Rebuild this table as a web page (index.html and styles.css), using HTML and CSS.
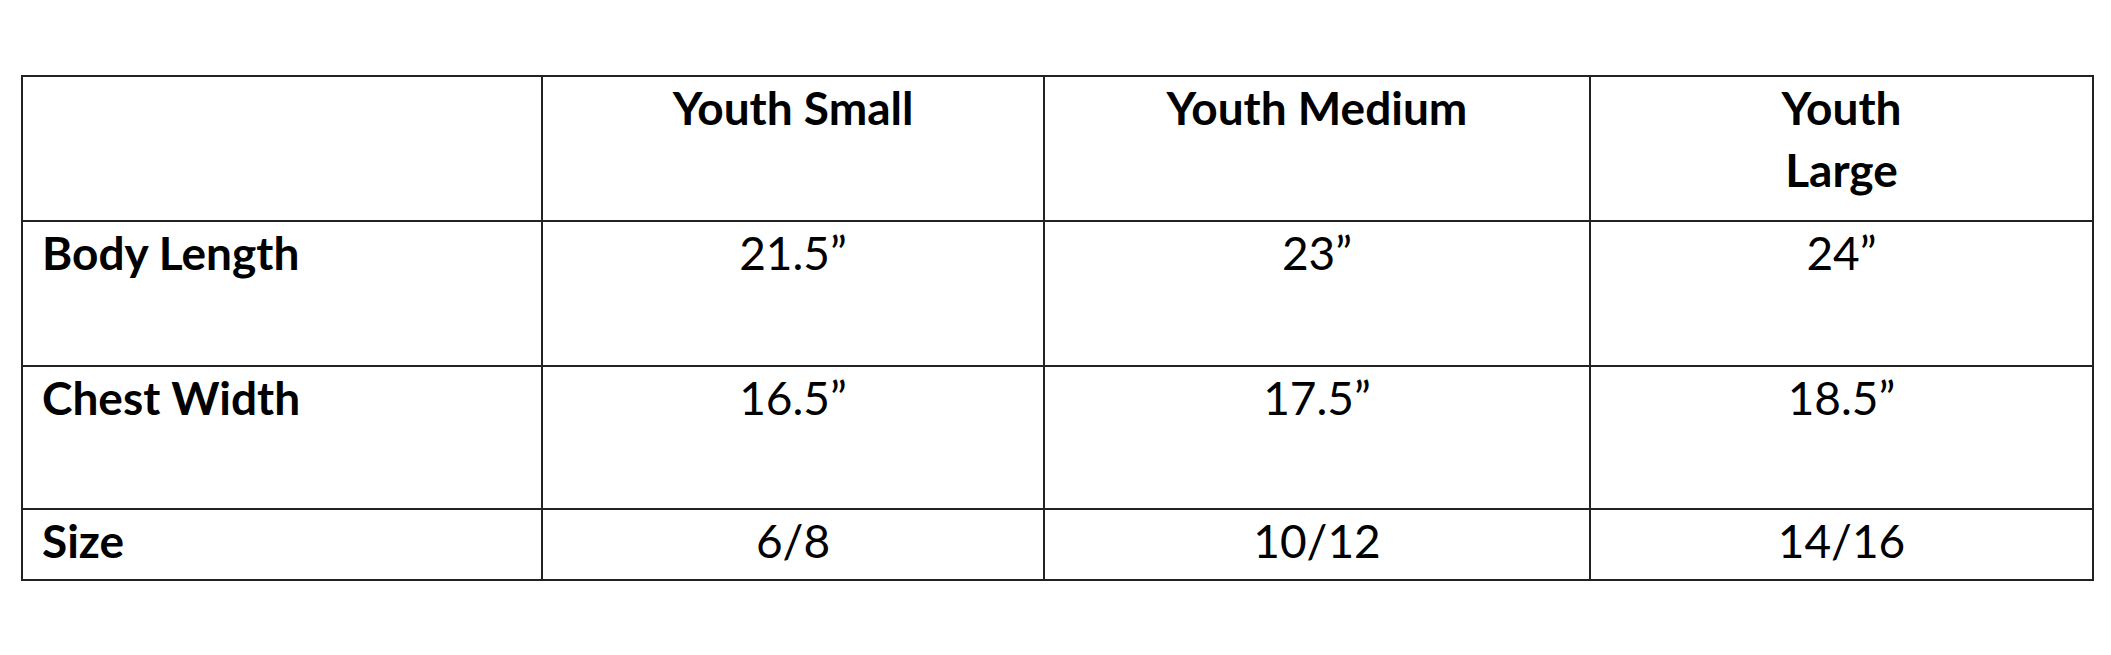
FILE: index.html
```html
<!DOCTYPE html>
<html lang="en">
<head>
    <meta charset="UTF-8">
    <meta name="viewport" content="width=device-width, initial-scale=1.0">
    <title>Size Chart</title>

    <link rel="stylesheet" href="styles.css">
</head>
<body>
    <div class="wrapper">
        <table class="size-chart">
            <colgroup>
                <col class="col-label">
                <col class="col-small">
                <col class="col-medium">
                <col class="col-large">
            </colgroup>
            <tr class="row-head">
                <td></td>
                <th>Youth Small</th>
                <th>Youth Medium</th>
                <th>Youth<br>Large</th>
            </tr>
            <tr class="row-tall">
                <th class="label">Body Length</th>
                <td>21.5”</td>
                <td>23”</td>
                <td>24”</td>
            </tr>
            <tr class="row-mid">
                <th class="label">Chest Width</th>
                <td>16.5”</td>
                <td>17.5”</td>
                <td>18.5”</td>
            </tr>
            <tr class="row-short">
                <th class="label">Size</th>
                <td>6/8</td>
                <td>10/12</td>
                <td>14/16</td>
            </tr>
        </table>
    </div>
</body>
</html>
```

FILE: styles.css
```css
body {
    margin: 0;
    padding: 0;
    background: #fff;
    font-family: Lato, "Open Sans", sans-serif;
    color: #000;
}

.wrapper {
    padding: 75px 20px 0 21px;
}

.size-chart {
    border-collapse: collapse;
    table-layout: fixed;
    width: 2071px;
    font-size: 46px;
    line-height: 62px;
}

.col-label {
    width: 520px;
}

.col-small {
    width: 502px;
}

.col-medium {
    width: 546px;
}

.col-large {
    width: 503px;
}

.size-chart td,
.size-chart th {
    border: 2px solid #222;
    vertical-align: top;
    text-align: center;
    padding: 0 20px;
    font-weight: 400;
}

.size-chart th {
    font-weight: 700;
}

.size-chart .label {
    text-align: left;
    padding-left: 19px;
}

.row-head,
.row-tall {
    height: 145px;
}

.row-mid {
    height: 143px;
}

.row-short {
    height: 71px;
}
```
